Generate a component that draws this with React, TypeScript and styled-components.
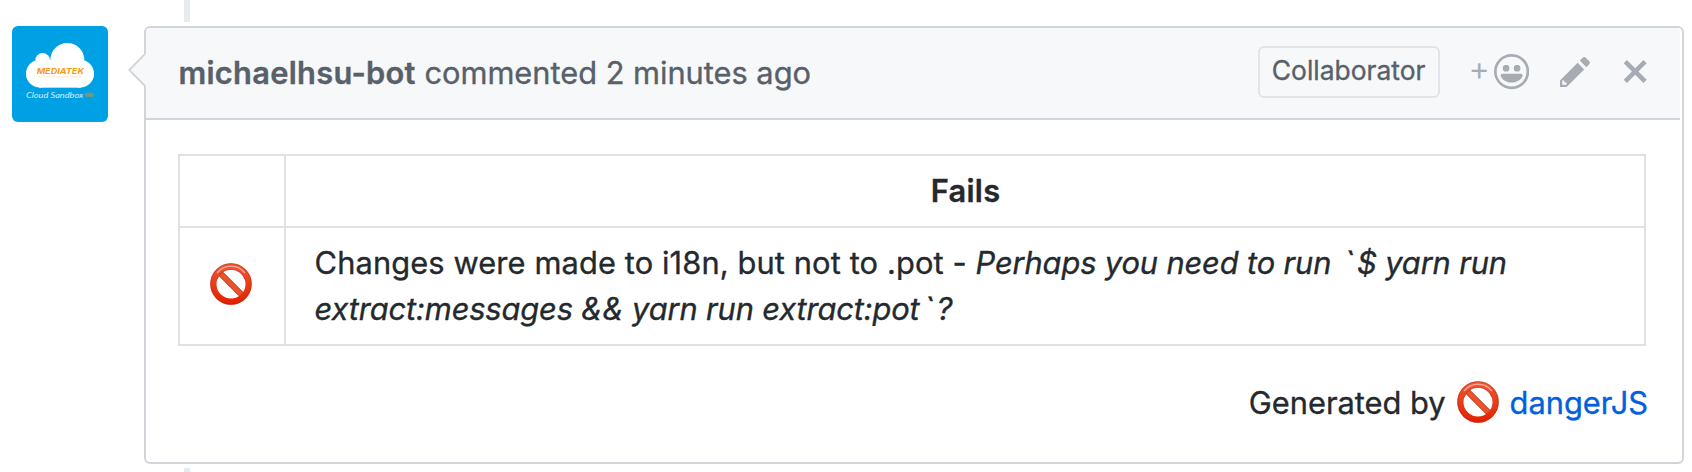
import React from "react";
import styled, { createGlobalStyle } from "styled-components";

const color = {
  text: "#24292e",
  muted: "#586069",
  border: "#d1d5da",
  tableBorder: "#dfe2e5",
  labelBorder: "#e1e4e8",
  headerBg: "#f6f8fa",
  icon: "#a7acb2",
  link: "#0360dc",
  timeline: "#e6ebf1",
};

const GlobalStyle = createGlobalStyle`
  *, *::before, *::after { box-sizing: border-box; }
  body {
    margin: 0;
    background: #fff;
    color: ${color.text};
    font-family: Inter, "Liberation Sans", sans-serif;
    font-size: 30.8px;
    line-height: 46.2px;
    -webkit-text-stroke: 0.35px currentColor;
  }
`;

const Page = styled.main`
  display: flex;
  align-items: flex-start;
  gap: 36px;
  height: 472px;
  padding: 0 8px 0 12px;
  overflow: hidden;
`;

const Avatar = styled.svg`
  flex: none;
  width: 96px;
  height: 96px;
  margin-top: 26px;
  border-radius: 6px;
  -webkit-text-stroke: 0;
`;

const Thread = styled.div`
  flex: 1;
  display: flex;
  flex-direction: column;
  gap: 4px;
`;

const TimelineLine = styled.div<{ $length: number }>`
  width: 6px;
  height: ${(p) => p.$length}px;
  margin-left: 40px;
  background: ${color.timeline};
`;

const Card = styled.article`
  position: relative;
  height: 438px;
  border: 2px solid ${color.border};
  border-radius: 6px;
  background: #fff;
`;

const Caret = styled.svg`
  position: absolute;
  left: -18px;
  top: 25px;
  width: 18px;
  height: 34px;
`;

const Header = styled.header`
  display: flex;
  align-items: center;
  justify-content: space-between;
  height: 92px;
  margin-right: 2px;
  padding: 0 32px 2px 32px;
  border-bottom: 2px solid ${color.border};
  border-radius: 4px 4px 0 0;
  background: ${color.headerBg};
  color: ${color.muted};
`;

const Title = styled.h3`
  margin: 2px 0 0 0.4px;
  font-size: inherit;
  font-weight: 400;
  white-space: pre;
  letter-spacing: -0.02px;
`;

const Author = styled.strong`
  font-weight: 600;
  letter-spacing: 0.3px;
`;

const Actions = styled.div`
  display: flex;
  align-items: center;
`;

const RoleLabel = styled.span`
  display: flex;
  align-items: center;
  justify-content: center;
  width: 182px;
  height: 52px;
  margin-right: 29px;
  padding-bottom: 4px;
  border: 2px solid ${color.labelBorder};
  border-radius: 6px;
  font-size: 26.4px;
  line-height: 40px;
`;

const Reaction = styled.span`
  display: flex;
  align-items: center;
  gap: 4.4px;
  margin-right: 30.6px;
  color: ${color.icon};
`;

const Plus = styled.span`
  display: flex;
  justify-content: center;
  width: 21px;
  padding-bottom: 7px;
  font-size: 32px;
  font-weight: 300;
  line-height: 36px;
`;

const Octicon = styled.svg<{ $width: number; $gap?: number }>`
  flex: none;
  width: ${(p) => p.$width}px;
  height: 35.2px;
  margin-right: ${(p) => p.$gap ?? 0}px;
  fill: ${color.icon};
`;

const Body = styled.div`
  padding: 34px 34px 0 32px;
`;

const Table = styled.table`
  width: 1468px;
  table-layout: fixed;
  border-collapse: collapse;
`;

const Row = styled.tr<{ $height: number }>`
  height: ${(p) => p.$height}px;
`;

const HeadCell = styled.th<{ $width?: number }>`
  width: ${(p) => (p.$width ? `${p.$width}px` : "auto")};
  padding: 0 27px 0 28px;
  border: 2px solid ${color.tableBorder};
  font-weight: 600;
  letter-spacing: 0.3px;
`;

const IconCell = styled.td`
  padding: 0 2px 4px 0;
  border: 2px solid ${color.tableBorder};
  vertical-align: middle;
`;

const MessageCell = styled.td`
  padding: 0 28px 0 28.6px;
  border: 2px solid ${color.tableBorder};
  vertical-align: middle;
  letter-spacing: 0.12px;
`;

const Hint = styled.em`
  letter-spacing: -0.12px;
`;

const Tick = styled.span`
  padding: 0 3.5px 0 4px;
`;

const Sign = styled.svg`
  display: block;
  flex: none;
  width: 42px;
  height: 42px;
  margin: 0 auto;
`;

const Footer = styled.p`
  display: flex;
  justify-content: flex-end;
  gap: 11px;
  margin: 34px 0 0;
`;

const FooterSign = styled.span`
  display: flex;
  padding-top: 1px;
`;

const Link = styled.a`
  color: ${color.link};
  text-decoration: none;
`;

function ProhibitedSign({ id }: { id: string }) {
  return (
    <Sign viewBox="0 0 42 42" role="img" aria-label="no entry">
      <defs>
        <linearGradient id={id} x1="0" y1="0" x2="0" y2="42" gradientUnits="userSpaceOnUse">
          <stop offset="0" stopColor="#ee5a3a" />
          <stop offset="0.45" stopColor="#e8401c" />
          <stop offset="1" stopColor="#e01f00" />
        </linearGradient>
      </defs>
      <path d="M9.6 9.6 32.4 32.4" stroke="#b23320" strokeWidth="5.8" />
      <path d="M9.6 9.6 32.4 32.4" stroke="#ee5229" strokeWidth="4.4" />
      <circle cx="21" cy="21" r="17.6" fill="none" stroke={`url(#${id})`} strokeWidth="6.2" />
      <circle cx="21" cy="21" r="20.3" fill="none" stroke="#b8200c" strokeOpacity=".6" strokeWidth=".8" />
      <path d="M7.2 16.2a14.6 14.6 0 0 1 27.6 0" fill="none" stroke="#a62b1c" strokeOpacity=".7" strokeWidth=".9" />
      <path d="M7.5 9.5a17.8 17.8 0 0 1 27 0" fill="none" stroke="#ffb9a8" strokeOpacity=".8" strokeWidth="1.6" strokeLinecap="round" />
    </Sign>
  );
}

function BotAvatar() {
  return (
    <Avatar viewBox="6 6 288 288" role="img" aria-label="michaelhsu-bot">
      <rect x="6" y="6" width="288" height="288" fill="#00a1e4" />
      <g fill="#fff">
        <circle cx="98" cy="109" r="22" />
        <circle cx="172" cy="108" r="51" />
        <circle cx="90" cy="149" r="42" />
        <circle cx="210" cy="149" r="42" />
        <rect x="88" y="108" width="124" height="83" />
      </g>
      <text x="80" y="151" fill="#f59b1c" fontFamily="Inter, sans-serif" fontSize="23" fontWeight="700" fontStyle="italic" textLength="142" lengthAdjust="spacingAndGlyphs">
        MEDIATEK
      </text>
      <path d="M84 158H214" stroke="#f59b1c" strokeOpacity=".12" strokeWidth="6" />
      <text x="48" y="223" fill="#d3f0fc" fontFamily="Lato, sans-serif" fontSize="25" fontStyle="italic" textLength="172" lengthAdjust="spacingAndGlyphs">
        Cloud Sandbox
      </text>
      <rect x="225" y="206" width="26" height="13" fill="#5f9c8e" />
      <path d="M228 210h20M228 215h20" stroke="#8e9d5c" strokeWidth="2" strokeDasharray="4 2" />
    </Avatar>
  );
}

export default function App() {
  return (
    <>
      <GlobalStyle />
      <Page>
        <BotAvatar />
        <Thread>
          <TimelineLine $length={22} />
          <Card>
            <Header>
              <Title>
                <Author>michaelhsu-bot</Author> commented 2 minutes ago
              </Title>
              <Actions>
                <RoleLabel>Collaborator</RoleLabel>
                <Reaction>
                  <Plus>+</Plus>
                  <Octicon $width={35.2} viewBox="0 0 16 16">
                    <path
                      fillRule="evenodd"
                      d="M8 0C3.58 0 0 3.58 0 8s3.58 8 8 8 8-3.58 8-8-3.58-8-8-8zm4.81 12.81a6.72 6.72 0 0 1-2.17 1.45c-.83.36-1.72.53-2.64.53-.92 0-1.81-.17-2.64-.53-.81-.34-1.55-.83-2.17-1.45a6.773 6.773 0 0 1-1.45-2.17A6.59 6.59 0 0 1 1.21 8c0-.92.17-1.81.53-2.64.34-.81.83-1.55 1.45-2.17.62-.62 1.36-1.11 2.17-1.45A6.59 6.59 0 0 1 8 1.21c.92 0 1.81.17 2.64.53.81.34 1.55.83 2.17 1.45.62.62 1.11 1.36 1.45 2.17.36.83.53 1.72.53 2.64 0 .92-.17 1.81-.53 2.64-.34.81-.83 1.55-1.45 2.17zM4 6.8v-.59c0-.66.53-1.19 1.2-1.19h.59c.66 0 1.19.53 1.19 1.19v.59c0 .67-.53 1.2-1.19 1.2H5.2C4.53 8 4 7.47 4 6.8zm5 0v-.59c0-.66.53-1.19 1.2-1.19h.59c.66 0 1.19.53 1.19 1.19v.59c0 .67-.53 1.2-1.19 1.2h-.59C9.53 8 9 7.47 9 6.8zm4 3.2c-.72 1.88-2.91 3-5 3s-4.28-1.13-5-3c-.14-.39.23-1 .66-1h8.59c.41 0 .89.61.75 1z"
                    />
                  </Octicon>
                </Reaction>
                <Octicon $width={30.8} $gap={31} viewBox="0 0 14 16">
                  <path
                    fillRule="evenodd"
                    d="M0 12v3h3l8-8-3-3-8 8zm3 2H1v-2h1v1h1v1zm10.3-9.3L12 6 9 3l1.3-1.3a.996.996 0 0 1 1.41 0l1.59 1.59c.39.39.39 1.02 0 1.41z"
                  />
                </Octicon>
                <Octicon $width={26.4} viewBox="0 0 12 16">
                  <path d="M7.48 8l3.75 3.75-1.48 1.48L6 9.48l-3.75 3.75-1.48-1.48L4.52 8 .77 4.25l1.48-1.48L6 6.52l3.75-3.75 1.48 1.48z" />
                </Octicon>
              </Actions>
            </Header>
            <Caret viewBox="0 0 18 34">
              <path d="M18 .8V33.2L16.4 33 1 17 16.4 1Z" fill={color.headerBg} />
              <path d="M17 1 1.2 17 17 33" fill="none" stroke={color.border} strokeWidth="1.8" />
            </Caret>
            <Body>
              <Table>
                <thead>
                  <Row $height={72}>
                    <HeadCell $width={106} />
                    <HeadCell>Fails</HeadCell>
                  </Row>
                </thead>
                <tbody>
                  <Row $height={118}>
                    <IconCell>
                      <ProhibitedSign id="sign-row" />
                    </IconCell>
                    <MessageCell>
                      Changes were made to i18n, but not to .pot -{" "}
                      <Hint>
                        Perhaps you need to run <Tick>`</Tick>$ yarn run extract:messages &amp;&amp; yarn run
                        extract:pot<Tick>`</Tick>?
                      </Hint>
                    </MessageCell>
                  </Row>
                </tbody>
              </Table>
              <Footer>
                <span>Generated by</span>
                <FooterSign>
                  <ProhibitedSign id="sign-footer" />
                </FooterSign>
                <Link>dangerJS</Link>
              </Footer>
            </Body>
          </Card>
          <TimelineLine $length={4} />
        </Thread>
      </Page>
    </>
  );
}
